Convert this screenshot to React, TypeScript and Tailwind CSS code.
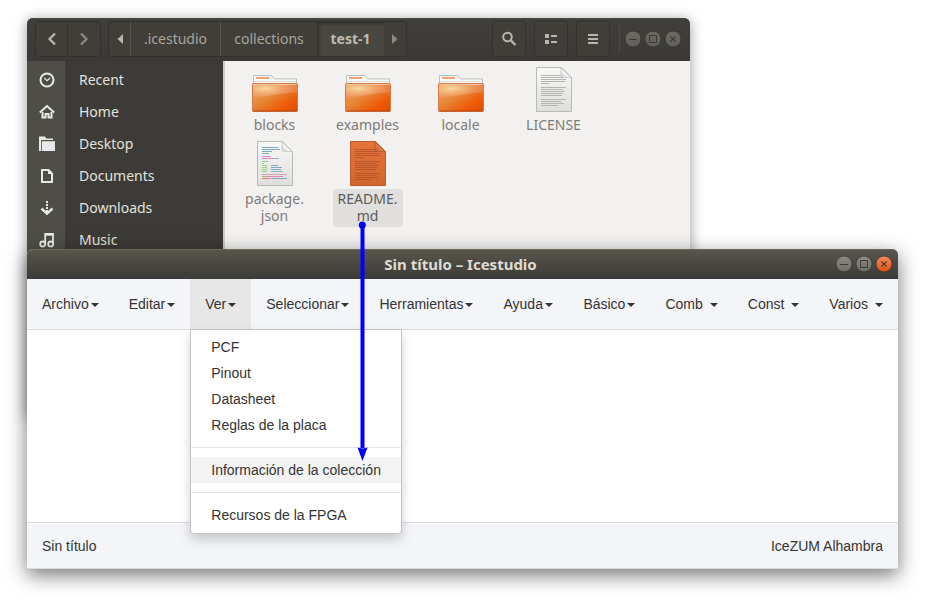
import type { ReactNode } from "react";

const UBUNTU = "font-['Noto_Sans','Open_Sans',sans-serif]";
const ARIAL = "font-['Liberation_Sans',Arial,sans-serif]";

function WindowButton({ kind, tone }: { kind: "min" | "max" | "close"; tone: "idle" | "active" }) {
  const orange = kind === "close" && tone === "active";
  const top = orange ? "#f58a63" : tone === "active" ? "#8d8b82" : "#6b6962";
  const bottom = orange ? "#e4500f" : tone === "active" ? "#6d6b63" : "#62605a";
  const id = `wb-${kind}-${tone}`;
  const label = kind === "min" ? "Minimizar" : kind === "max" ? "Maximizar" : "Cerrar";
  return (
    <button type="button" aria-label={label} className="size-5">
      <svg viewBox="0 0 20 20" className="size-5" fill="none">
        <defs>
          <linearGradient id={id} x1="0" y1="0" x2="0" y2="1">
            <stop offset="0" stopColor={top} />
            <stop offset="1" stopColor={bottom} />
          </linearGradient>
        </defs>
        <circle cx="10" cy="10" r="8" fill={`url(#${id})`} stroke="#34332f" strokeWidth="0.8" />
        <g stroke="#3a3934" strokeWidth="1">
          {kind === "min" && <path d="M6 10.5h8" />}
          {kind === "max" && <path d="M6.5 6.5h7v7h-7z" />}
          {kind === "close" && <path d="M7.3 7.3l5.4 5.4M12.7 7.3l-5.4 5.4" strokeWidth="1.1" />}
        </g>
      </svg>
    </button>
  );
}

function WindowButtons({ tone }: { tone: "idle" | "active" }) {
  return (
    <div className="flex">
      <WindowButton kind="min" tone={tone} />
      <WindowButton kind="max" tone={tone} />
      <WindowButton kind="close" tone={tone} />
    </div>
  );
}

function ToolButton({ label, children }: { label: string; children: ReactNode }) {
  return (
    <button
      type="button"
      aria-label={label}
      className="flex h-9 w-[34px] items-center justify-center rounded border border-[#32312d] bg-[#3f3e39] shadow-[inset_0_1px_0_#484741]"
    >
      {children}
    </button>
  );
}

const places: { name: string; icon: ReactNode }[] = [
  {
    name: "Recent",
    icon: (
      <>
        <circle cx="8" cy="8" r="6.5" strokeWidth="2" />
        <path d="M5.2 6l2.8 2.6L11 6" strokeWidth="1.2" />
      </>
    ),
  },
  {
    name: "Home",
    icon: (
      <>
        <path d="M0.8 8.6L8 2l7.2 6.6" strokeWidth="2" />
        <path d="M3.500 8V13.500h3v-3.600h3V13.500h3V8" strokeWidth="2" />
      </>
    ),
  },
  {
    name: "Desktop",
    icon: (
      <>
        <path d="M0 15V0.5h6l1.2 2H14V4H2.2v11z" fill="#e8e8e6" stroke="none" />
        <path d="M3 5.2h13V15H3z" fill="#e8e8e6" stroke="none" />
      </>
    ),
  },
  {
    name: "Documents",
    icon: (
      <>
        <path d="M3 2h6.500L13 5.500V14H3z" strokeWidth="2" />
        <path d="M9 2v4h4z" fill="#e8e8e6" stroke="none" />
      </>
    ),
  },
  {
    name: "Downloads",
    icon: (
      <>
        <path d="M8 1v11" strokeWidth="2" strokeDasharray="2 1" />
        <path d="M2.5 8.5L8 13.6l5.5-5.1" strokeWidth="2.4" />
      </>
    ),
  },
  {
    name: "Music",
    icon: (
      <>
        <path d="M6.2 12V2h7.8v9.5" strokeWidth="1.8" />
        <path d="M6 2.500h8" strokeWidth="2.400" />
        <circle cx="3.7" cy="12" r="2.5" strokeWidth="1.8" />
        <circle cx="11.7" cy="12" r="2.5" strokeWidth="1.8" />
      </>
    ),
  },
];

function FolderIcon() {
  return (
    <svg viewBox="0 0 48 45" className="h-[45px] w-12">
      <defs>
        <linearGradient id="folder-face" x1="0" y1="0" x2="1" y2="1">
          <stop offset="0" stopColor="#f0a85e" />
          <stop offset="0.45" stopColor="#e58433" />
          <stop offset="0.75" stopColor="#ee5a08" />
          <stop offset="1" stopColor="#d94d06" />
        </linearGradient>
        <radialGradient id="folder-glow" cx="0.28" cy="0.3" r="0.8">
          <stop offset="0" stopColor="#f8dca0" stopOpacity="0.95" />
          <stop offset="1" stopColor="#f0805a" stopOpacity="0.45" />
        </radialGradient>
      </defs>
      <path d="M2.5 17V8.5h18l3 3.4h22V17z" fill="#fafafa" stroke="#bdbdbb" strokeWidth="1" />
      <rect x="5" y="10" width="13" height="2" fill="#f2a074" />
      <path d="M3 14.5h42" stroke="#dcdcda" strokeWidth="1" />
      <rect x="1.5" y="16.5" width="45" height="28" rx="1" fill="url(#folder-face)" stroke="#d27a48" strokeWidth="1" />
      <path d="M2 17h44v8.5C34 26 18 28.5 2 32z" fill="url(#folder-glow)" />
      <path d="M2.5 17.5h43" stroke="#f7c59c" strokeWidth="1" />
      <path d="M2 44h44" stroke="#b94a12" strokeWidth="1" />
    </svg>
  );
}

const textRows = [
  [9, 25], [11, 22], [13, 25], [15, 24], [17, 8],
  [21, 25], [23, 22], [25, 24], [27, 22], [29, 21],
  [33, 25], [35, 20], [37, 23], [39, 17],
];

const codeRows: [number, number, number, string][] = [
  [6, 7, 16, "#7fa8bd"], [6, 9, 18, "#7fa8bd"], [6, 11, 10, "#7fa8bd"], [6, 13, 7, "#7fa8bd"],
  [6, 16, 9, "#c98be0"], [6, 18, 5, "#c98be0"], [10, 18, 7, "#e387b8"], [17, 18, 6, "#8fb3c8"],
  [6, 21, 6, "#9bcf8b"], [6, 23, 2, "#9bcf8b"],
  [6, 25, 5, "#9bcf8b"], [15, 25, 7, "#7fa8bd"], [6, 27, 5, "#9bcf8b"], [15, 27, 11, "#7fa8bd"],
  [6, 29, 5, "#9bcf8b"], [15, 29, 10, "#7fa8bd"], [6, 31, 5, "#9bcf8b"], [15, 31, 12, "#8fb3c8"],
  [6, 34, 25, "#e0a0bd"], [6, 36, 5, "#a9b0a0"], [11, 36, 16, "#e387b8"],
  [6, 38, 8, "#e5766a"], [15, 38, 16, "#7fa8bd"],
];

function PageIcon({ kind }: { kind: "text" | "code" | "selected" }) {
  const sel = kind === "selected";
  const id = `page-${kind}`;
  return (
    <svg viewBox="0 0 36 45" className="h-[45px] w-9">
      <defs>
        <linearGradient id={id} x1="0" y1="0" x2="0" y2="1">
          <stop offset="0" stopColor={sel ? "#e5743a" : "#f8f8f7"} />
          <stop offset="1" stopColor={sel ? "#d2652f" : "#dededd"} />
        </linearGradient>
        <linearGradient id={`${id}-fold`} x1="0" y1="1" x2="1" y2="0">
          <stop offset="0" stopColor={sel ? "#b9572a" : "#c4c4c3"} />
          <stop offset="0.5" stopColor={sel ? "#ea8550" : "#ffffff"} />
        </linearGradient>
      </defs>
      <path d="M0.5 0.5h25l10 10v34h-35z" fill={`url(#${id})`} stroke={sel ? "#b95a2c" : "#b9b9b7"} />
      {kind === "code"
        ? codeRows.map(([x, y, w, c], i) => <rect key={i} x={x - 1} y={y - 1} width={w} height="1" fill={c} />)
        : textRows.map(([y, w], i) => <rect key={i} x="5" y={y - 1} width={w} height="1" fill={sel ? "#b9562a" : "#b5b5b3"} />)}
      <path
        d="M25 1v7c0 1.800 1 2.500 2.500 2.500H35z"
        fill={`url(#${id}-fold)`}
        stroke={sel ? "#b4562a" : "#c3c3c1"}
        strokeWidth="0.800"
      />
    </svg>
  );
}

const files: { name: ReactNode; id: string; icon: ReactNode; selected?: boolean }[] = [
  { id: "blocks", name: "blocks", icon: <FolderIcon /> },
  { id: "examples", name: "examples", icon: <FolderIcon /> },
  { id: "locale", name: "locale", icon: <FolderIcon /> },
  { id: "license", name: "LICENSE", icon: <PageIcon kind="text" /> },
  { id: "package", name: <>package.<br />json</>, icon: <PageIcon kind="code" /> },
  { id: "readme", name: <>README.<br />md</>, icon: <PageIcon kind="selected" />, selected: true },
];

function FileManager() {
  return (
    <section
      aria-label="test-1"
      className={`absolute top-[18px] right-[243px] left-[27px] flex min-h-[397px] flex-col rounded-t-md bg-[#f2f1f0] shadow-[0_2px_14px_rgba(0,0,0,0.4)] ${UBUNTU}`}
    >
      <header className="flex h-[43px] items-center rounded-t-md bg-linear-to-b from-[#413f3a] to-[#3a3935] pr-[7px] pb-0.5 pl-2 shadow-[inset_0_1px_0_#4a4943]">
        <div className="flex h-9 rounded border border-[#32312d] bg-[#3f3e39]">
          <button type="button" aria-label="Back" className="flex w-8 items-center justify-center border-r border-[#32312d]">
            <svg viewBox="0 0 12 14" className="h-3.5 w-3" fill="none" stroke="#bab5ab" strokeWidth="2.200"><path d="M9 1.500L3.500 7L9 12.500" /></svg>
          </button>
          <button type="button" aria-label="Forward" className="flex w-8 items-center justify-center">
            <svg viewBox="0 0 12 14" className="h-3.5 w-3" fill="none" stroke="#8d8981" strokeWidth="2.200"><path d="M3 1.500L8.500 7L3 12.500" /></svg>
          </button>
        </div>
        <nav aria-label="Path" className="ml-[7px] flex h-9 rounded border border-[#32312d] bg-[#3f3e39] text-sm text-[#a9a59b]">
          <button type="button" aria-label="Scroll left" className="flex w-[22px] items-center justify-center border-r border-[#55534a]">
            <svg viewBox="0 0 6 10" className="h-2.5 w-1.5" fill="#bab5ab"><path d="M6 0v10L0.500 5z" /></svg>
          </button>
          <button type="button" className="w-[90px] border-r border-[#55534a]">.icestudio</button>
          <button type="button" className="w-24">collections</button>
          <button type="button" className="w-[67px] bg-[#484740] font-bold text-[#bfbbb0] shadow-[inset_2px_2px_3px_#32312d]">test-1</button>
          <button type="button" aria-label="Scroll right" className="flex w-[22px] items-center justify-center">
            <svg viewBox="0 0 6 10" className="h-2.5 w-1.5" fill="#8d8981"><path d="M0 0v10L5.500 5z" /></svg>
          </button>
        </nav>
        <div className="ml-auto flex gap-2">
          <ToolButton label="Search">
            <svg viewBox="0 0 16 16" className="size-4" fill="none" stroke="#bab5ab">
              <circle cx="6.500" cy="6" r="4.300" strokeWidth="2" /><path d="M9.800 9.300l4.700 4.700" strokeWidth="2.400" />
            </svg>
          </ToolButton>
          <ToolButton label="View">
            <svg viewBox="0 0 16 16" className="size-4" fill="#bab5ab">
              <path d="M2 3h4v4H2zM8 4h6v2H8zM2 9h4v4H2zM8 10h6v2H8z" />
            </svg>
          </ToolButton>
          <ToolButton label="Menu">
            <svg viewBox="0 0 16 16" className="size-4" fill="#bab5ab">
              <path d="M3 3h10v2H3zM3 7h10v2H3zM3 11h10v2H3z" />
            </svg>
          </ToolButton>
        </div>
        <div className="mr-[3px] ml-[9px] h-7 w-px bg-[#4b4a43]" />
        <WindowButtons tone="idle" />
      </header>
      <div className="flex flex-1">
        <ul className="w-[196px] shrink-0 bg-linear-to-r from-[#4f4e46] from-[38px] to-[#3c3b37] to-[38px] pt-[3px]">
          {places.map((p) => (
            <li key={p.name}>
              <a href="#" className="flex h-8 items-center pl-3 text-sm text-[#e4e2dd]">
                <svg viewBox="0 0 16 16" className="mr-6 size-4" fill="none" stroke="#e8e8e6">{p.icon}</svg>
                {p.name}
              </a>
            </li>
          ))}
        </ul>
        <div className="flex-1 border-l-2 border-[#cfcdca] pt-1.5 pl-[3px]">
          <ul className="grid grid-cols-[repeat(auto-fill,93px)] gap-y-[5px]">
            {files.map((f) => (
              <li key={f.id} className="flex flex-col items-center gap-[3px]">
                {f.icon}
                <span className={`min-w-[70px] rounded pt-px pb-[3px] text-center text-sm leading-[17px] ${f.selected ? "bg-[#e0dfde] text-[#5c5b58]" : "text-[#7d7b78]"}`}>
                  {f.name}
                </span>
              </li>
            ))}
          </ul>
        </div>
      </div>
    </section>
  );
}

function MenuButton({ label, open, spaced }: { label: string; open?: boolean; spaced?: boolean }) {
  return (
    <button
      type="button"
      aria-haspopup="menu"
      aria-expanded={!!open}
      className={`flex h-[50px] items-center px-[15px] ${spaced ? "gap-[7px]" : "gap-0.5"} ${open ? "bg-[#e7e7e7]" : ""}`}
    >
      {label}
      <span className="mt-px border-x-4 border-t-4 border-x-transparent border-t-[#333]" />
    </button>
  );
}

function MenuItem({ label, active }: { label: string; active?: boolean }) {
  return (
    <li role="none">
      <a href="#" role="menuitem" className={`block px-5 py-[3px] whitespace-nowrap ${active ? "bg-[#f3f3f3]" : ""}`}>{label}</a>
    </li>
  );
}

function ViewMenu() {
  return (
    <ul
      role="menu"
      className="absolute top-[50px] left-0 z-10 min-w-[212px] rounded-b border border-[#c4c4c4] bg-white pt-1 pb-[5px] shadow-[0_6px_12px_rgba(0,0,0,0.18)]"
    >
      <MenuItem label="PCF" />
      <MenuItem label="Pinout" />
      <MenuItem label="Datasheet" />
      <MenuItem label="Reglas de la placa" />
      <li role="separator" className="my-[9px] h-px bg-[#e5e5e5]" />
      <MenuItem label="Información de la colección" active />
      <li role="separator" className="my-[9px] h-px bg-[#e5e5e5]" />
      <MenuItem label="Recursos de la FPGA" />
    </ul>
  );
}

function Icestudio() {
  return (
    <section
      aria-label="Icestudio"
      className="absolute top-[249px] right-[35px] left-[27px] rounded-t-md bg-white shadow-[0_6px_20px_rgba(0,0,0,0.55)]"
    >
      <header className={`grid h-[30px] grid-cols-[1fr_auto_1fr] items-center rounded-t-md bg-linear-to-b from-[#59574c] to-[#3c3b37] pr-1 shadow-[inset_0_1px_0_#6a685c] ${UBUNTU}`}>
        <h1 className="col-start-2 text-[15px] font-bold text-[#dfdbd2]">Sin título – Icestudio</h1>
        <div className="justify-self-end"><WindowButtons tone="active" /></div>
      </header>
      <div className={`text-sm text-[#333] ${ARIAL}`}>
        <nav className="flex justify-between border-b border-[#dbdcde] bg-[#f4f5f8]">
          <div className="flex">
            <MenuButton label="Archivo" />
            <MenuButton label="Editar" />
            <div className="relative">
              <MenuButton label="Ver" open />
              <ViewMenu />
            </div>
            <MenuButton label="Seleccionar" />
            <MenuButton label="Herramientas" />
            <MenuButton label="Ayuda" />
          </div>
          <div className="flex">
            <MenuButton label="Básico" />
            <MenuButton label="Comb" spaced />
            <MenuButton label="Const" spaced />
            <MenuButton label="Varios" spaced />
          </div>
        </nav>
        <main className="h-48" />
        <footer className="flex h-[47px] items-center justify-between border-y border-[#dbdcde] bg-[#f4f5f8] px-[15px]">
          <span>Sin título</span>
          <span>IceZUM Alhambra</span>
        </footer>
      </div>
    </section>
  );
}

export default function App() {
  return (
    <div className="relative min-h-screen overflow-hidden bg-white">
      <FileManager />
      <Icestudio />
      <svg viewBox="0 0 12 242" className="pointer-events-none absolute top-[220px] left-[356px] z-20 h-[242px] w-3" fill="#00f">
        <circle cx="6.300" cy="5" r="3.500" />
        <path d="M4.500 5h4v223h-4z" />
        <path d="M1.500 227.500l5 1l5-1L6.500 241z" />
      </svg>
    </div>
  );
}
